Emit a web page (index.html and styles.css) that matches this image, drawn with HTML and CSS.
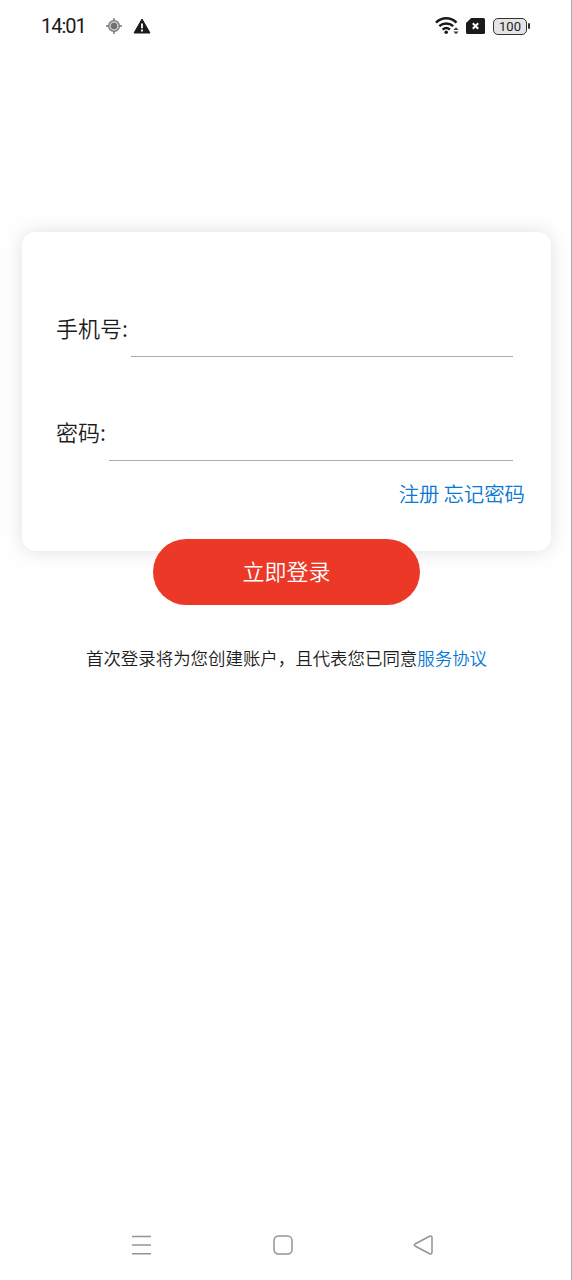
FILE: index.html
```
<!DOCTYPE html>
<html lang="zh-CN">
<head>
    <meta charset="UTF-8">
    <meta name="viewport" content="width=device-width, initial-scale=1.0">
    <title>登录</title>
    <link rel="stylesheet" href="styles.css">
</head>
<body>
    <div class="phone">
        <header class="status-bar">
            <span class="time">14:01</span>
            <svg class="icon-locate" width="16" height="16" viewBox="0 0 16 16">
                <circle cx="8" cy="8" r="5.4" fill="#ccc" stroke="#777" stroke-width="1.3"/>
                <circle cx="8" cy="8" r="3.2" fill="#707070"/>
                <path d="M8 0v3M8 13v3M0 8h3M13 8h3" stroke="#777" stroke-width="1.4"/>
            </svg>
            <svg class="icon-warning" width="18" height="16" viewBox="0 0 18 16">
                <path d="M9 1 17 15H1z" fill="#1a1a1a" stroke="#1a1a1a" stroke-width="1" stroke-linejoin="round"/>
                <path d="M9 5.5v4.7M9 11.6v1.8" stroke="#fff" stroke-width="1.8"/>
            </svg>
            <div class="status-right">
                <svg width="24" height="20" viewBox="0 0 24 20">
                    <g fill="none" stroke="#1a1a1a" stroke-width="2.5">
                        <path d="M1 6.6C7 .9 15.5.9 21.5 6.6"/>
                        <path d="M4.3 10.2c4-3.7 9.9-3.7 13.9 0"/>
                        <path d="M7.6 13.6c2.2-2 5.1-2 7.3 0"/>
                    </g>
                    <circle cx="11.2" cy="16.3" r="1.8" fill="#1a1a1a"/>
                    <path d="M18.3 14 21 11.2 23.7 14zM18.3 15.500h5.400L21 18.300z" fill="#444"/>
                </svg>
                <svg class="icon-sim" width="19" height="16" viewBox="0 0 19 16">
                    <path d="M5.2 0H17.5Q19 0 19 1.5V14.5Q19 16 17.5 16H1.5Q0 16 0 14.5V5z" fill="#1a1a1a"/>
                    <path d="m6.8 5.3 5.4 5.4m0-5.400-5.400 5.400" stroke="#fff" stroke-width="2"/>
                </svg>
                <div class="battery">100</div>
            </div>
        </header>

        <main>
            <form class="card">
                <label class="field">
                    <span>手机号:</span>
                    <input type="tel">
                </label>
                <label class="field">
                    <span>密码:</span>
                    <input type="password">
                </label>
                <div class="links">
                    <a href="#">注册</a>
                    <a href="#">忘记密码</a>
                </div>
            </form>
            <button class="login-btn" type="button">立即登录</button>
            <p class="agreement">首次登录将为您创建账户，且代表您已同意<a href="#">服务协议</a></p>
        </main>

        <nav class="nav-bar">
            <svg width="20" height="20" viewBox="0 0 20 20">
                <path d="M0 1.4h19M0 10h19M0 18.7h19"/>
            </svg>
            <svg width="20" height="20" viewBox="0 0 20 20">
                <rect x="1" y="1" width="18" height="18" rx="4.5"/>
            </svg>
            <svg width="20" height="20" viewBox="0 0 20 20">
                <path d="M2 9 16.5 1.3Q18.8.6 19 2.6V17.4Q18.8 19.4 16.5 18.7L2 11Q.6 10 2 9z"/>
            </svg>
        </nav>
    </div>
</body>
</html>
```
FILE: styles.css
```
* {
    box-sizing: border-box;
}

body {
    margin: 0;
    font-family: "Noto Sans CJK SC", sans-serif;
    font-weight: 350;
    color: #1c1c1c;
    background-color: #fff;
}

a {
    color: #0878d4;
    text-decoration: none;
}

.phone {
    display: flex;
    flex-direction: column;
    width: 572px;
    height: 1280px;
    border-right: 1px solid #aaa;
    background-color: #fefefe;
    overflow: hidden;
}

/* Status bar */
.status-bar {
    display: flex;
    align-items: center;
    height: 52px;
    padding: 0 42px 0 41px;
}

.time {
    width: 65px;
    font-family: Roboto, sans-serif;
    font-size: 20px;
    font-weight: 400;
    letter-spacing: -1px;
}

.icon-warning {
    margin-left: 11px;
}

.status-right {
    display: flex;
    align-items: center;
    margin-left: auto;
}

.icon-sim {
    margin-left: 7px;
}

.battery {
    position: relative;
    width: 34px;
    height: 17px;
    margin: 0 2px 0 8px;
    border: 1px solid #333;
    border-radius: 5px;
    background-color: #e4e4e4;
    font-family: Roboto, sans-serif;
    font-size: 13px;
    font-weight: 400;
    line-height: 15px;
    text-align: center;
}

.battery::after {
    content: "";
    position: absolute;
    top: 4px;
    right: -4px;
    width: 2px;
    height: 6px;
    border-radius: 1px;
    background-color: #333;
}

/* Login form */
main {
    flex: 1;
    display: flex;
    flex-direction: column;
    align-items: center;
    padding-top: 180px;
}

.card {
    width: 529px;
    height: 319px;
    margin-left: 2px;
    padding: 74px 26px 0 34px;
    border-radius: 14px;
    background-color: #fff;
    box-shadow: 0 0 18px rgba(0, 0, 0, 0.12);
}

.field {
    display: flex;
    height: 51px;
    margin: 0 12px 53px 0;
    font-size: 22px;
    line-height: 42px;
}

.field + .field {
    margin-bottom: 17px;
}

.field input {
    flex: 1;
    min-width: 0;
    margin-left: 3px;
    padding: 0;
    border: 0;
    border-bottom: 1px solid #aaa;
    background: none;
    font: inherit;
    outline: none;
}

.links {
    display: flex;
    justify-content: flex-end;
    gap: 4px;
    font-size: 20.4px;
    line-height: 30px;
}

.login-btn {
    position: relative;
    width: 267px;
    height: 66px;
    margin: -12px 0 0 2px;
    padding: 0 0 4px;
    border: 0;
    border-radius: 33px;
    background-color: #ec3927;
    color: #fff;
    font: inherit;
    font-size: 22px;
}

.agreement {
    margin: 40px 0 0 2px;
    font-size: 17.45px;
    line-height: 26px;
    white-space: nowrap;
}

/* System navigation */
.nav-bar {
    display: flex;
    align-items: center;
    justify-content: space-between;
    height: 70px;
    padding: 0 138px 0 132px;
}

.nav-bar svg {
    fill: none;
    stroke: #949494;
    stroke-width: 1.5;
}
```
